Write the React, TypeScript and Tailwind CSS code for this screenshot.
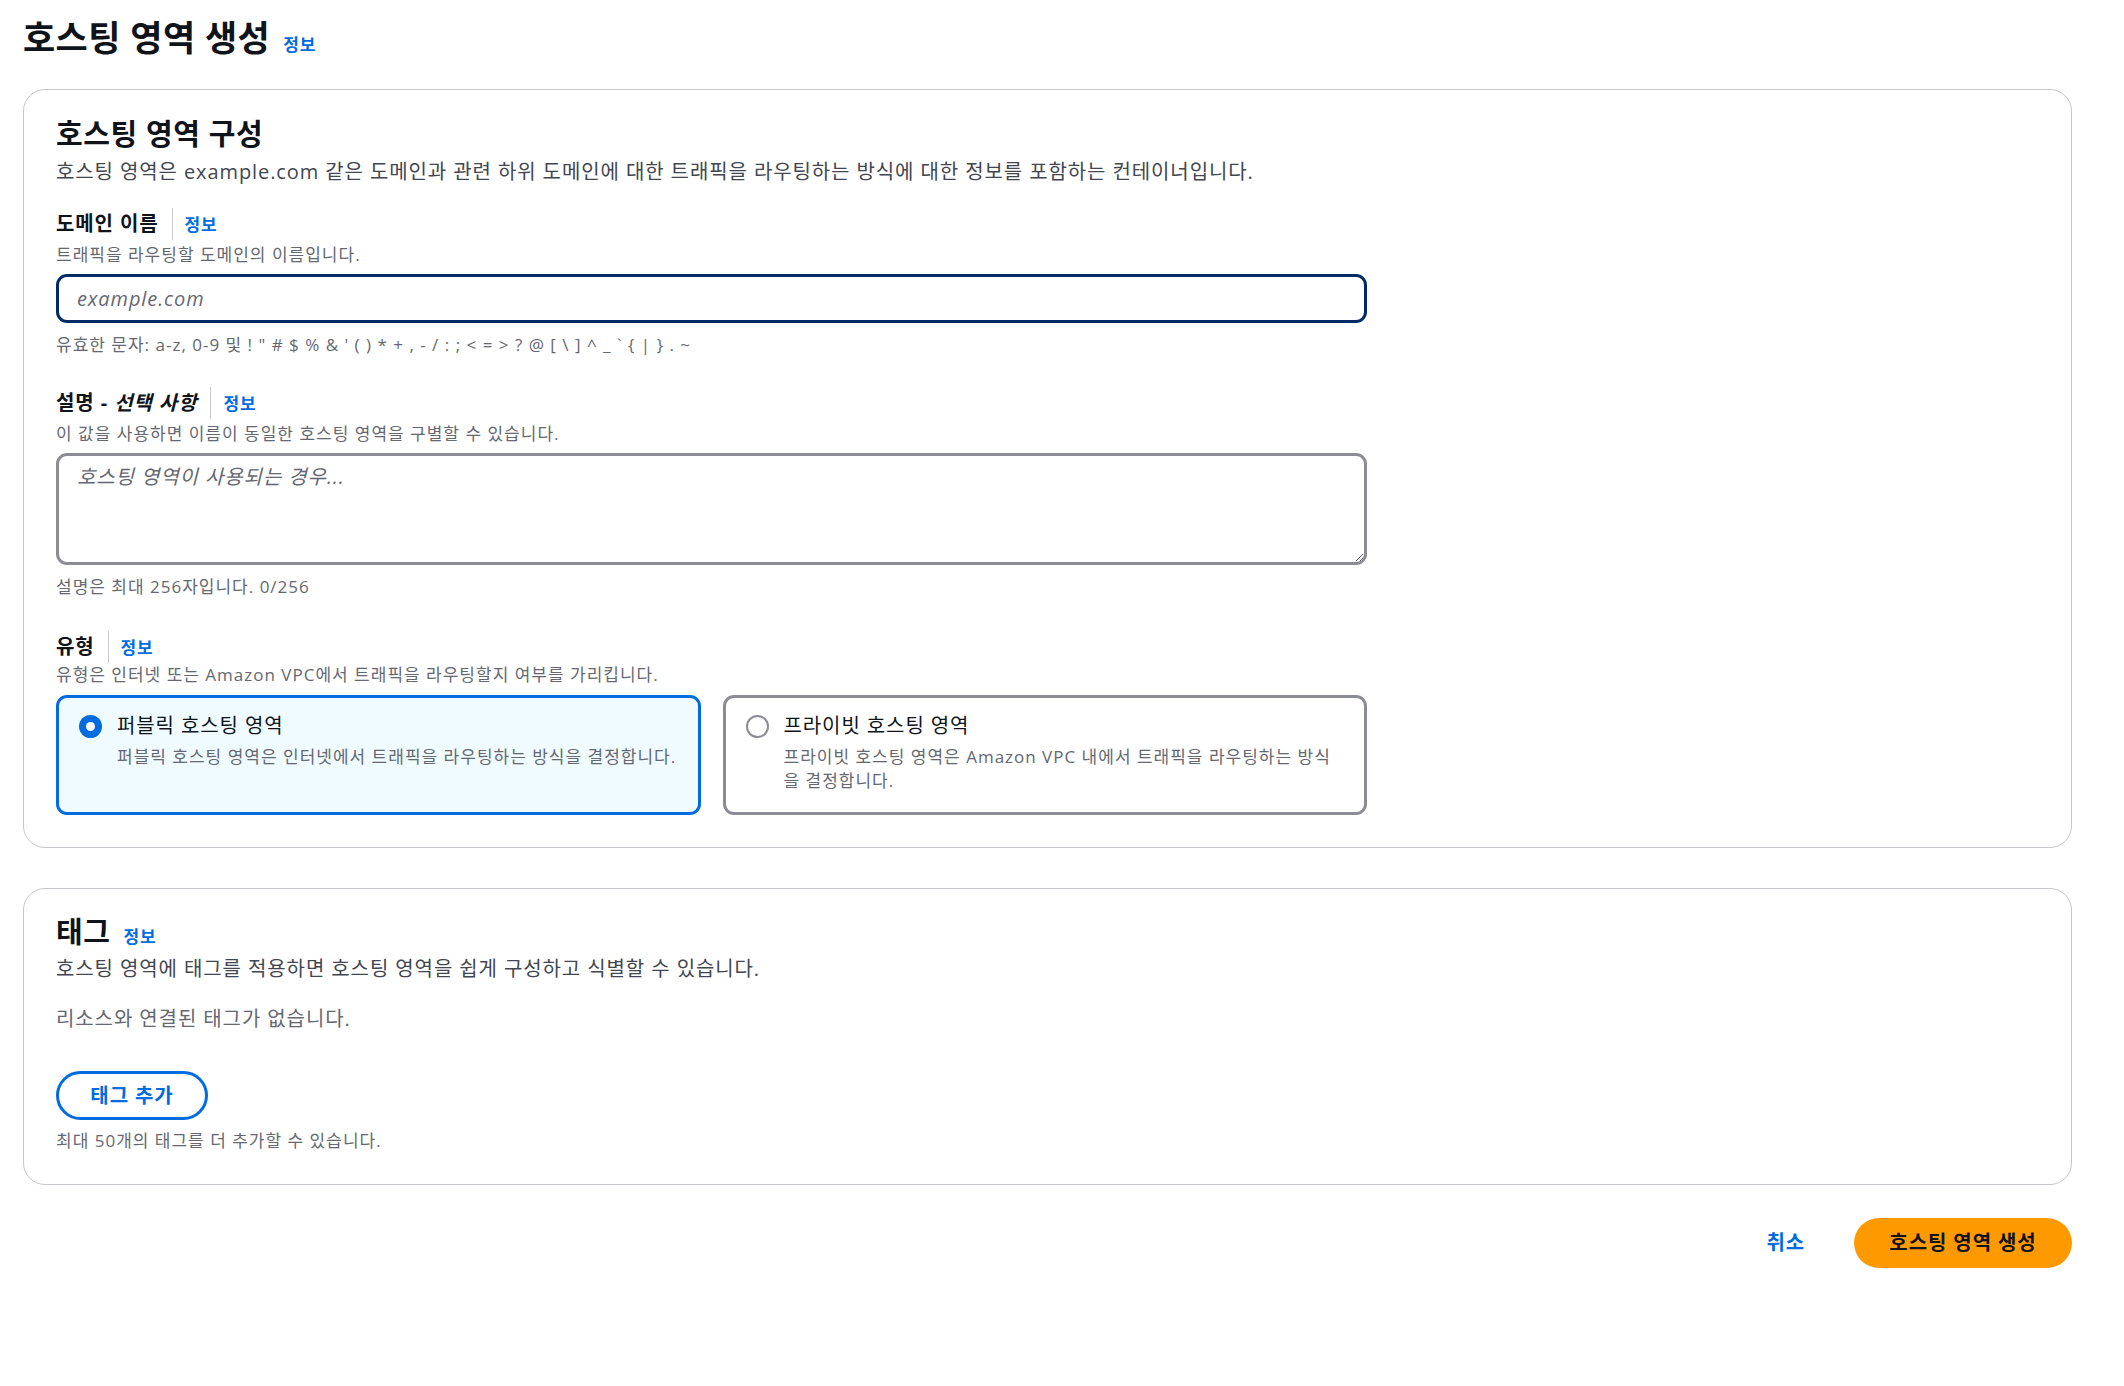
import React from "react";

const FONT = "font-['Open_Sans','Noto_Sans_CJK_KR',sans-serif]";
const BODY = "text-[20px] tracking-[0.9px]";
const SMALL = "text-[17px] tracking-[1px]";

function InfoLink({ className = "" }: { className?: string }) {
    return (
        <span className={`text-[17px] font-bold tracking-[0.8px] text-[#006ce0] leading-none ${className}`}>정보</span>
    );
}

function FieldLabel({ children }: { children: React.ReactNode }) {
    return (
        <div className="flex h-[32px] items-center">
            <span className={`${BODY} font-bold leading-[28px] text-[#0f141a]`}>{children}</span>
            <span className="ml-[13px] h-[32px] w-px bg-[#c6c6cd]" />
            <InfoLink className="ml-[12px]" />
        </div>
    );
}

function Radio({ checked }: { checked: boolean }) {
    if (checked) {
        return (
            <span className="flex h-[23px] w-[23px] shrink-0 items-center justify-center rounded-full bg-[#006ce0]">
                <span className="block h-[9px] w-[9px] rounded-full bg-white" />
            </span>
        );
    }
    return <span className="block h-[23px] w-[23px] shrink-0 rounded-full border-[2.5px] border-[#8c8c94] bg-white" />;
}

interface TileProps {
    checked: boolean;
    label: string;
    description: string;
}

function Tile({ checked, label, description }: TileProps) {
    return (
        <div
            className={`flex h-[120px] gap-[15px] rounded-[11px] border-[3px] pl-[20px] pr-[20px] pt-[15px] ${
                checked ? "border-[#006ce0] bg-[#f0fbff]" : "border-[#8c8c94] bg-white"
            }`}
        >
            <div className="pt-[2px]">
                <Radio checked={checked} />
            </div>
            <div className="flex flex-col">
                <span className={`${BODY} leading-[26px] text-[#0f141a]`}>{label}</span>
                <span className={`${SMALL} mt-[6px] leading-[24px] text-[#656871]`}>{description}</span>
            </div>
        </div>
    );
}

export default function App() {
    return (
        <div className={`min-h-[1386px] w-[2124px] bg-white pl-[23px] pr-[52px] pt-[18px] ${FONT}`}>
            {/* Page header */}
            <div className="flex h-[40px] items-baseline">
                <h1 className="text-[35px] font-bold leading-[40px] tracking-[0.4px] text-[#0f141a]">호스팅 영역 생성</h1>
                <InfoLink className="ml-[13px]" />
            </div>

            {/* Hosted zone configuration */}
            <section className="mt-[31px] rounded-[22px] border border-[#c6c6cd] pb-[32px] pl-[32px] pt-[27px]">
                <h2 className="text-[29px] font-bold leading-[34px] tracking-[0.6px] text-[#0f141a]">호스팅 영역 구성</h2>
                <p className={`${BODY} mt-[8px] leading-[26px] text-[#424650]`}>
                    호스팅 영역은 example.com 같은 도메인과 관련 하위 도메인에 대한 트래픽을 라우팅하는 방식에 대한 정보를 포함하는 컨테이너입니다.
                </p>

                <div className="w-[1311px]">
                    <div className="mt-[23px]">
                        <FieldLabel>도메인 이름</FieldLabel>
                    </div>
                    <p className={`${SMALL} mt-[4px] leading-[22px] text-[#656871]`}>
                        트래픽을 라우팅할 도메인의 이름입니다.
                    </p>
                    <input
                        className={`${BODY} mt-[8px] block h-[49px] w-full rounded-[11px] border-[3px] border-[#002b66] px-[18px] text-[#0f141a] outline-none placeholder:italic placeholder:text-[#656871]`}
                        placeholder="example.com"
                    />
                    <p className={`${SMALL} mt-[11px] leading-[22px] text-[#656871]`}>
                        유효한 문자: a-z, 0-9 및 ! " # $ % &amp; ' ( ) * + , - / : ; &lt; = &gt; ? @ [ \ ] ^ _ ` {"{"} | {"}"} . ~
                    </p>

                    <div className="mt-[31px]">
                        <FieldLabel>
                            설명 - <i>선택 사항</i>
                        </FieldLabel>
                    </div>
                    <p className={`${SMALL} mt-[4px] leading-[22px] text-[#656871]`}>
                        이 값을 사용하면 이름이 동일한 호스팅 영역을 구별할 수 있습니다.
                    </p>
                    <textarea
                        className={`${BODY} mt-[8px] block h-[112px] w-full rounded-[11px] border-[3px] border-[#8c8c94] px-[18px] pt-[8px] leading-[26px] text-[#0f141a] outline-none placeholder:italic placeholder:text-[#656871]`}
                        placeholder="호스팅 영역이 사용되는 경우..."
                    />
                    <p className={`${SMALL} mt-[11px] leading-[22px] text-[#656871]`}>설명은 최대 256자입니다. 0/256</p>

                    <div className="mt-[33px]">
                        <FieldLabel>유형</FieldLabel>
                    </div>
                    <p className={`${SMALL} mt-[1px] leading-[22px] text-[#656871]`}>
                        유형은 인터넷 또는 Amazon VPC에서 트래픽을 라우팅할지 여부를 가리킵니다.
                    </p>
                    <div className="mt-[9px] grid grid-cols-2 gap-[22px]">
                        <Tile
                            checked
                            label="퍼블릭 호스팅 영역"
                            description="퍼블릭 호스팅 영역은 인터넷에서 트래픽을 라우팅하는 방식을 결정합니다."
                        />
                        <Tile
                            checked={false}
                            label="프라이빗 호스팅 영역"
                            description="프라이빗 호스팅 영역은 Amazon VPC 내에서 트래픽을 라우팅하는 방식을 결정합니다."
                        />
                    </div>
                </div>
            </section>

            {/* Tags */}
            <section className="mt-[40px] rounded-[22px] border border-[#c6c6cd] pb-[32px] pl-[32px] pt-[26px]">
                <div className="flex items-baseline">
                    <h2 className="text-[29px] font-bold leading-[34px] tracking-[0.6px] text-[#0f141a]">태그</h2>
                    <InfoLink className="ml-[13px]" />
                </div>
                <p className={`${BODY} mt-[7px] leading-[26px] text-[#424650]`}>
                    호스팅 영역에 태그를 적용하면 호스팅 영역을 쉽게 구성하고 식별할 수 있습니다.
                </p>
                <p className={`${BODY} mt-[24px] leading-[26px] text-[#656871]`}>리소스와 연결된 태그가 없습니다.</p>
                <button
                    className={`${BODY} mt-[39px] flex h-[49px] w-[152px] items-center justify-center rounded-full border-[3px] border-[#006ce0] font-bold text-[#006ce0]`}
                >
                    태그 추가
                </button>
                <p className={`${SMALL} mt-[10px] leading-[22px] text-[#656871]`}>최대 50개의 태그를 더 추가할 수 있습니다.</p>
            </section>

            {/* Actions */}
            <div className="mt-[33px] flex items-center justify-end gap-[49px]">
                <span className={`${BODY} font-bold text-[#006ce0]`}>취소</span>
                <button
                    className={`${BODY} flex h-[50px] w-[218px] items-center justify-center rounded-full bg-[#ff9900] font-bold text-[#0f141a]`}
                >
                    호스팅 영역 생성
                </button>
            </div>
        </div>
    );
}
